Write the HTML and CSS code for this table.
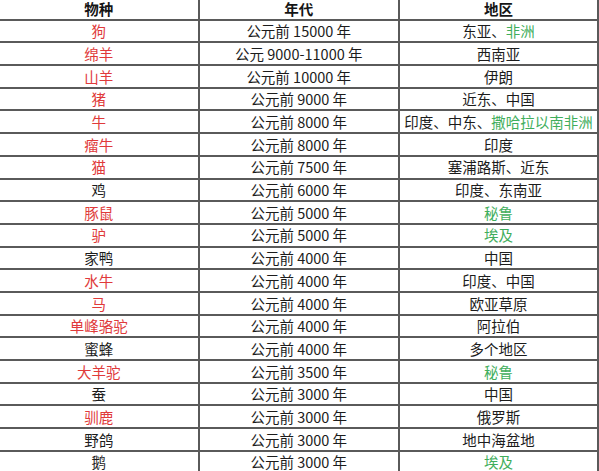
FILE: index.html
```html
<!DOCTYPE html>
<html lang="zh">
<head>
<meta charset="utf-8">
<title>驯化物种</title>
<link rel="stylesheet" href="styles.css">
</head>
<body>
<div class="table">
  <div class="cell head">物种</div><div class="cell head">年代</div><div class="cell head">地区</div>
  <div class="cell red">狗</div><div class="cell">公元前 15000 年</div><div class="cell">东亚、<span class="green">非洲</span></div>
  <div class="cell red">绵羊</div><div class="cell">公元 9000-11000 年</div><div class="cell">西南亚</div>
  <div class="cell red">山羊</div><div class="cell">公元前 10000 年</div><div class="cell">伊朗</div>
  <div class="cell red">猪</div><div class="cell">公元前 9000 年</div><div class="cell">近东、中国</div>
  <div class="cell red">牛</div><div class="cell">公元前 8000 年</div><div class="cell">印度、中东、<span class="green">撒哈拉以南非洲</span></div>
  <div class="cell red">瘤牛</div><div class="cell">公元前 8000 年</div><div class="cell">印度</div>
  <div class="cell red">猫</div><div class="cell">公元前 7500 年</div><div class="cell">塞浦路斯、近东</div>
  <div class="cell">鸡</div><div class="cell">公元前 6000 年</div><div class="cell">印度、东南亚</div>
  <div class="cell red">豚鼠</div><div class="cell">公元前 5000 年</div><div class="cell green">秘鲁</div>
  <div class="cell red">驴</div><div class="cell">公元前 5000 年</div><div class="cell green">埃及</div>
  <div class="cell">家鸭</div><div class="cell">公元前 4000 年</div><div class="cell">中国</div>
  <div class="cell red">水牛</div><div class="cell">公元前 4000 年</div><div class="cell">印度、中国</div>
  <div class="cell red">马</div><div class="cell">公元前 4000 年</div><div class="cell">欧亚草原</div>
  <div class="cell red">单峰骆驼</div><div class="cell">公元前 4000 年</div><div class="cell">阿拉伯</div>
  <div class="cell">蜜蜂</div><div class="cell">公元前 4000 年</div><div class="cell">多个地区</div>
  <div class="cell red">大羊驼</div><div class="cell">公元前 3500 年</div><div class="cell green">秘鲁</div>
  <div class="cell">蚕</div><div class="cell">公元前 3000 年</div><div class="cell">中国</div>
  <div class="cell red">驯鹿</div><div class="cell">公元前 3000 年</div><div class="cell">俄罗斯</div>
  <div class="cell">野鸽</div><div class="cell">公元前 3000 年</div><div class="cell">地中海盆地</div>
  <div class="cell">鹅</div><div class="cell">公元前 3000 年</div><div class="cell green">埃及</div>
</div>
</body>
</html>
```
FILE: styles.css
```css
html, body {
  margin: 0;
  padding: 0;
  background: #ffffff;
}
body {
  font-family: "Noto Sans CJK SC", "Liberation Sans", sans-serif;
  font-size: 14.5px;
  color: #1c1c1c;
  overflow: hidden;
}
.table {
  display: grid;
  grid-template-columns: 199.5px 200.5px 199px;
  grid-template-rows: 20.7px repeat(20, 22.7px);
}
.cell {
  display: flex;
  align-items: center;
  justify-content: center;
  border-right: 2px solid #5a5a5a;
  border-bottom: 2px solid #5a5a5a;
  white-space: nowrap;
  line-height: 1;
  padding-top: 1px;
}
.head {
  font-weight: bold;
  color: #151515;
  padding-top: 0;
}
.red {
  color: #e03a3a;
}
.green {
  color: #3fae5c;
}
```
